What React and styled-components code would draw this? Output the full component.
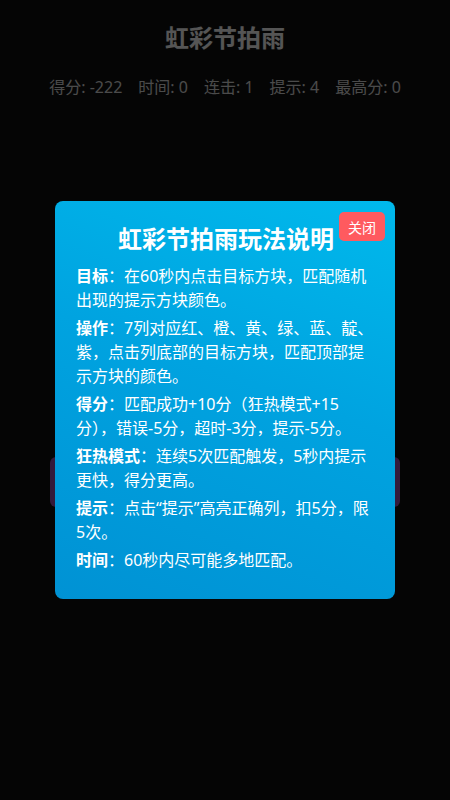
import React from "react";
import styled, { createGlobalStyle } from "styled-components";

const Global = createGlobalStyle`
  * { box-sizing: border-box; }
  html, body { margin: 0; padding: 0; background: #111; }
  body {
    font-family: "Noto Sans", "Noto Sans CJK SC", sans-serif;
    width: 450px;
    height: 800px;
    overflow: hidden;
  }
`;

const Page = styled.div`
  width: 450px;
  height: 800px;
  background: #111;
  padding: 20px 0 0;
  display: flex;
  flex-direction: column;
  align-items: center;
`;

const Title = styled.h1`
  margin: 0;
  font-size: 24px;
  line-height: 36px;
  font-weight: 700;
  color: #f2f2f2;
`;

const Stats = styled.div`
  margin-top: 20px;
  display: flex;
  gap: 16px;
  font-size: 16px;
  line-height: 22px;
  color: #d6d6d6;
`;

const Board = styled.div`
  width: 350px;
  height: 341px;
`;

const HintBar = styled.div`
  width: 350px;
  height: 50px;
  border-radius: 6px;
  background: #944ca8;
  margin-top: 18px;
`;

const Overlay = styled.div`
  position: fixed;
  inset: 0;
  background: rgba(0, 0, 0, 0.65);
  display: flex;
  align-items: center;
  justify-content: center;
`;

const Modal = styled.div`
  position: relative;
  width: 340px;
  border-radius: 8px;
  padding: 22px 19px 23px 21px;
  background: linear-gradient(200deg, #00b9ec 0%, #00a3e0 45%, #0092d4 100%);
  color: #fff;
`;

const CloseButton = styled.button`
  position: absolute;
  top: 11px;
  right: 10px;
  width: 46px;
  height: 29px;
  border: none;
  border-radius: 5px;
  background: #ff5a5f;
  color: #fff;
  font-family: inherit;
  font-size: 14px;
  padding: 0;
  cursor: pointer;
`;

const ModalTitle = styled.h2`
  margin: 0 0 9px;
  text-align: center;
  font-size: 24px;
  line-height: 32px;
  font-weight: 700;
`;

const Rule = styled.p`
  margin: 0 0 4px;
  font-size: 16px;
  line-height: 24px;
`;

const Label = styled.strong`
  font-weight: 700;
`;

const stats = [
  ["得分", "-222"],
  ["时间", "0"],
  ["连击", "1"],
  ["提示", "4"],
  ["最高分", "0"],
];

const rules = [
  ["目标", "在60秒内点击目标方块，匹配随机出现的提示方块颜色。"],
  ["操作", "7列对应红、橙、黄、绿、蓝、靛、紫，点击列底部的目标方块，匹配顶部提示方块的颜色。"],
  ["得分", "匹配成功+10分（狂热模式+15分），错误-5分，超时-3分，提示-5分。"],
  ["狂热模式", "连续5次匹配触发，5秒内提示更快，得分更高。"],
  ["提示", "点击“提示”高亮正确列，扣5分，限5次。"],
  ["时间", "60秒内尽可能多地匹配。"],
];

export default function App() {
  return (
    <>
      <Global />
      <Page>
        <Title>虹彩节拍雨</Title>
        <Stats>
          {stats.map(([k, v]) => (
            <span key={k}>
              {k}: {v}
            </span>
          ))}
        </Stats>
        <Board />
        <HintBar />
      </Page>
      <Overlay>
        <Modal>
          <CloseButton>关闭</CloseButton>
          <ModalTitle>虹彩节拍雨玩法说明</ModalTitle>
          {rules.map(([k, v]) => (
            <Rule key={k}>
              <Label>{k}</Label>：{v}
            </Rule>
          ))}
        </Modal>
      </Overlay>
    </>
  );
}
